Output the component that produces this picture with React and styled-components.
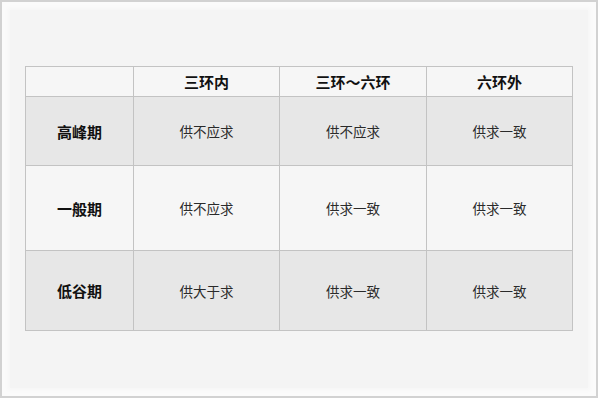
import React from "react";
import styled, { createGlobalStyle } from "styled-components";

const Global = createGlobalStyle`
  html, body { margin: 0; padding: 0; background: #ffffff; }
  body { font-family: "Noto Sans CJK SC", "Liberation Sans", sans-serif; }
`;

const Frame = styled.div`
  box-sizing: border-box;
  width: 598px;
  height: 398px;
  border: 2px solid #d2d2d2;
  background: #fbfbfb;
  padding: 8px;
`;

const Panel = styled.div`
  box-sizing: border-box;
  height: 100%;
  background: #f4f4f4;
  box-shadow: 0 0 4px 2px #f6f6f6;
  padding: 56px 0 0 15px;
`;

const Table = styled.table`
  border-collapse: collapse;
  width: 547px;
  table-layout: fixed;
  color: #2a2a2a;
`;

const Col = styled.col`
  width: ${(p) => p.$w}px;
`;

const Row = styled.tr`
  height: ${(p) => p.$h}px;
  background: ${(p) => (p.$shade ? "#e7e7e7" : "#f6f6f6")};
`;

const Head = styled.th`
  border: 1px solid #c3c3c3;
  font-size: 15px;
  font-weight: 700;
  color: #111;
  text-align: center;
  padding: 0;
`;

const Cell = styled.td`
  border: 1px solid #c3c3c3;
  font-size: 13.5px;
  text-align: center;
  padding: 0;
`;

const rows = [
  { label: "高峰期", h: 69, shade: true, vals: ["供不应求", "供不应求", "供求一致"] },
  { label: "一般期", h: 85, shade: false, vals: ["供不应求", "供求一致", "供求一致"] },
  { label: "低谷期", h: 80, shade: true, vals: ["供大于求", "供求一致", "供求一致"] },
];

export default function App() {
  return (
    <>
      <Global />
      <Frame>
        <Panel>
          <Table>
            <colgroup>
              <Col $w={108} />
              <Col $w={146} />
              <Col $w={147} />
              <Col $w={146} />
            </colgroup>
            <tbody>
              <Row $h={30}>
                <Head />
                <Head>三环内</Head>
                <Head>三环～六环</Head>
                <Head>六环外</Head>
              </Row>
              {rows.map((r) => (
                <Row key={r.label} $h={r.h} $shade={r.shade}>
                  <Head>{r.label}</Head>
                  {r.vals.map((v, i) => (
                    <Cell key={i}>{v}</Cell>
                  ))}
                </Row>
              ))}
            </tbody>
          </Table>
        </Panel>
      </Frame>
    </>
  );
}
